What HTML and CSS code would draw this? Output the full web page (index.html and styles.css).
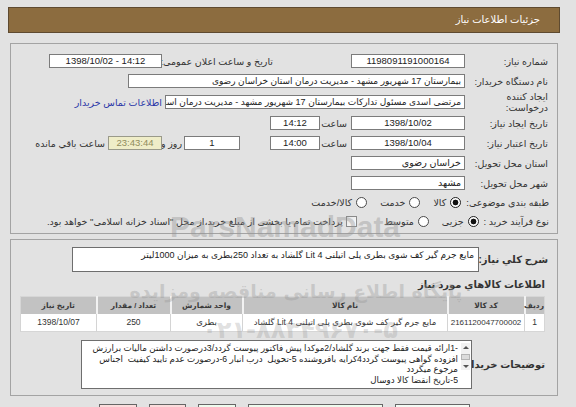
FILE: index.html
```html
<!DOCTYPE html>
<html lang="fa" dir="rtl">
<head>
<meta charset="utf-8">
<title>جزئیات اطلاعات نیاز</title>
<link rel="stylesheet" href="styles.css">
</head>
<body>
<div class="page">
  <div class="titlebar">جزئیات اطلاعات نیاز</div>

  <div class="panel panel-info">
    <div class="row">
      <div class="lbl">شماره نیاز:</div>
      <div class="box w114 c">1198091191000164</div>
      <div class="lbl2">تاریخ و ساعت اعلان عمومی:</div>
      <div class="box w113 c ltr">1398/10/02 - 14:12</div>
    </div>
    <div class="row">
      <div class="lbl">نام دستگاه خریدار:</div>
      <div class="box w337">بیمارستان 17 شهریور مشهد - مدیریت درمان استان خراسان رضوی</div>
    </div>
    <div class="row row-tall">
      <div class="lbl two">ایجاد کننده<br>درخواست:</div>
      <div class="box w300">مرتضی اسدی مسئول تداركات بیمارستان 17 شهریور مشهد - مدیریت درمان استان خراسان رضوی</div>
      <a class="contact" href="#">اطلاعات تماس خریدار</a>
    </div>
    <div class="row">
      <div class="lbl">تاریخ ایجاد نیاز:</div>
      <div class="box w114 c">1398/10/02</div>
      <div class="unit">ساعت</div>
      <div class="box w50 c">14:12</div>
    </div>
    <div class="row">
      <div class="lbl">تاریخ اعتبار نیاز:</div>
      <div class="box w114 c">1398/10/04</div>
      <div class="unit">ساعت</div>
      <div class="box w50 c">14:00</div>
      <div class="box w56 c days">1</div>
      <div class="unit-day">روز و</div>
      <div class="box w54 c countdown">23:43:44</div>
      <div class="remain">ساعت باقي مانده</div>
    </div>
    <div class="row">
      <div class="lbl">استان محل تحویل:</div>
      <div class="box w114">خراسان رضوی</div>
    </div>
    <div class="row">
      <div class="lbl">شهر محل تحویل:</div>
      <div class="box w114">مشهد</div>
    </div>
    <div class="row row-opt">
      <div class="lbl-auto">طبقه بندی موضوعی:</div>
      <span class="radio on"></span><span class="opt">کالا</span>
      <span class="radio"></span><span class="opt">خدمت</span>
      <span class="radio"></span><span class="opt">کالا/خدمت</span>
    </div>
    <div class="row row-opt row-last">
      <div class="lbl-auto">نوع فرآیند خرید :</div>
      <span class="radio on"></span><span class="opt">جزیی</span>
      <span class="radio"></span><span class="opt">متوسط</span>
      <span class="check"></span><span class="opt">پرداخت تمام یا بخشی از مبلغ خرید،از محل "اسناد خزانه اسلامی" خواهد بود.</span>
    </div>
  </div>

  <div class="panel panel-items">
    <div class="desc-row">
      <div class="blbl desc-lbl">شرح کلي نیاز:</div>
      <div class="descbox">مایع جرم گیر كف شوی بطری پلی اتیلنی 4 Lit گلشاد به تعداد 250بطری به میزان 1000لیتر</div>
    </div>
    <div class="sect-title">اطلاعات کالاهاي مورد نیاز</div>
    <table class="items">
      <colgroup>
        <col class="c-idx"><col class="c-code"><col class="c-name"><col class="c-unit"><col class="c-qty"><col class="c-date">
      </colgroup>
      <thead>
        <tr><th>ردیف</th><th>کد کالا</th><th>نام کالا</th><th>واحد شمارش</th><th>تعداد / مقدار</th><th>تاریخ نیاز</th></tr>
      </thead>
      <tbody>
        <tr><td>1</td><td class="code">2161120047700002</td><td>مایع جرم گیر كف شوی بطری پلی اتیلنی 4 Lit گلشاد</td><td>بطری</td><td>250</td><td>1398/10/07</td></tr>
      </tbody>
    </table>
    <div class="notes-row">
      <div class="blbl notes-lbl">توضیحات خریدار:</div>
      <div class="notes">
        <div class="scrollbar">
          <span class="arrow up"></span>
          <span class="thumb"></span>
          <span class="arrow down"></span>
        </div>
        <div class="notes-text">
          <div class="line">-1ارائه قیمت فقط جهت برند گلشاد/2موكدا پیش فاكتور پیوست گردد/3درصورت داشتن مالیات برارزش</div>
          <div class="line">افزوده گواهی پیوست گردد4كرایه بافروشنده 5-تحویل&nbsp; درب انبار 6-درصورت عدم تایید کیفیت&nbsp; اجناس</div>
          <div class="line">مرجوع میگردد</div>
          <div class="line">5-تاریخ انقضا كالا دوسال</div>
        </div>
      </div>
    </div>
  </div>

  <div class="buttons">
    <button class="btn btn-a" type="button"></button>
    <button class="btn btn-b" type="button"></button>
    <button class="btn btn-c" type="button"></button>
    <button class="btn btn-d" type="button"></button>
    <button class="btn btn-e" type="button"></button>
  </div>
</div>

<div class="watermark" aria-hidden="true">
  <svg class="wm-svg" width="576" height="407" viewBox="0 0 576 407">
    <text class="wm-latin" x="285" y="237" text-anchor="middle">ParsNamadData</text>
    <text class="wm-fa" x="296" y="298" text-anchor="middle">پایگاه اطلاع رسانی مناقصه ومزایده</text>
    <text class="wm-phone" x="300" y="338" text-anchor="middle" direction="ltr">۰۲۱-۸۸۳۴۹۶۷۰-۵</text>
  </svg>
</div>
</body>
</html>
```

FILE: styles.css
```css
* { box-sizing: border-box; }

html { background: #e2e2e2; }

body {
  margin: 7px 16px 8px 8px;
  background: #e2e2e2;
  color: #333;
  direction: rtl;
  font-family: "Liberation Sans", "DejaVu Sans", sans-serif;
  font-size: 9.5px;
}

.page {
  width: 552px;
  margin-right: auto;
  margin-left: 0;
}

.titlebar {
  height: 26px;
  line-height: 24px;
  background: #8c6c3f;
  border: 1px solid #5e4a30;
  color: #fff;
  padding-right: 19px;
  font-size: 10px;
}

.panel {
  border: 1px solid #a3a3a3;
  margin: 0 2px;
}

.panel-info {
  margin-top: 10px;
  padding: 7px 8px 3px 8px;
}

.row {
  display: flex;
  align-items: center;
  height: 20px;
}
.row-tall { height: 22px; }
.row-opt { height: 19px; }
.row-last { height: 18px; }

.lbl {
  flex: none;
  width: 84px;
  padding-right: 1px;
  white-space: nowrap;
}
.lbl.two { line-height: 11px; }

.lbl2 {
  flex: none;
  width: 111px;
  margin-right: 78px;
  white-space: nowrap;
}

.box {
  flex: none;
  height: 14px;
  line-height: 12px;
  border: 1px solid #7b7b7b;
  background: #fff;
  color: #222;
  padding: 0 3px;
  white-space: nowrap;
  overflow: hidden;
}
.box.c { text-align: center; }
.box.ltr { direction: ltr; }

.w114 { width: 114px; }
.w113 { width: 113px; }
.w337 { width: 337px; font-size: 9px; }
.w300 { width: 300px; font-size: 9px; }
.w50 { width: 50px; }
.w56 { width: 56px; }
.w54 { width: 54px; }

.contact {
  margin-right: 3px;
  color: #2b38a8;
  text-decoration: none;
  white-space: nowrap;
}

.unit {
  flex: none;
  width: 31px;
  padding-right: 4px;
  white-space: nowrap;
}

.days { margin-right: 30px; }

.unit-day {
  flex: none;
  width: 22px;
  padding-right: 2px;
  white-space: nowrap;
}

.countdown {
  background: #efedc8;
  color: #8f8c5c;
  border-color: #9a9a8a;
}

.remain {
  margin-right: 3px;
  white-space: nowrap;
}

.lbl-auto {
  flex: none;
  white-space: nowrap;
  margin-left: 5px;
}

.radio {
  flex: none;
  width: 11px;
  height: 11px;
  border: 1px solid #4a4a4a;
  border-radius: 50%;
  background: #fff;
  margin-left: 4px;
}
.radio.on {
  background: radial-gradient(circle, #111 0 2.6px, #fff 3.2px);
  border-color: #222;
}

.opt {
  white-space: nowrap;
  margin-left: 13px;
}

.check {
  flex: none;
  width: 11px;
  height: 11px;
  border: 1px solid #8a8a8a;
  background: linear-gradient(135deg, #e4e4e4, #fff);
  margin-right: 14px;
  margin-left: 3px;
}

/* panel 2 */
.panel-items {
  margin-top: 5px;
  padding: 7px 8px 6px 8px;
}

.blbl {
  font-weight: bold;
  font-size: 10px;
  color: #333;
  white-space: nowrap;
  flex: none;
}

.desc-row {
  display: flex;
  align-items: center;
}
.desc-lbl { width: 70px; padding-right: 1px; }

.descbox {
  width: 407px;
  height: 25px;
  background: #fff;
  border: 1px solid #6e6e6e;
  color: #222;
  padding: 1px 4px;
  line-height: 12px;
  font-size: 9px;
  white-space: nowrap;
  overflow: hidden;
}

.sect-title {
  margin: 6px 4px 0 0;
  height: 14px;
  line-height: 14px;
  font-weight: bold;
  font-size: 10px;
}

.items {
  margin: 4px 4px 0 0;
  width: 524px;
  border-collapse: collapse;
  table-layout: fixed;
  border: 1px solid #d6d6d6;
  font-size: 8.5px;
}
.c-idx { width: 20px; }
.c-code { width: 77px; }
.c-name { width: 205px; }
.c-unit { width: 72px; }
.c-qty { width: 74px; }
.c-date { width: 76px; }

.items th {
  height: 17px;
  background: #c2c2c2;
  border-left: 2px solid #f2f2f2;
  color: #3a3a3a;
  font-weight: bold;
  font-size: 7.5px;
  text-align: center;
  padding: 0;
  white-space: nowrap;
}
.items th:last-child { border-left: none; }

.items td {
  height: 18px;
  background: #fff;
  border-left: 1px solid #d4d4d4;
  color: #333;
  text-align: center;
  padding: 0 1px;
  white-space: nowrap;
  overflow: hidden;
}
.items td.code {
  font-size: 8px;
  padding: 0;
}

.notes-row {
  display: flex;
  align-items: center;
  margin: 8px 4px 0 0;
}
.notes-lbl { width: 73px; }

.notes {
  width: 391px;
  height: 49px;
  background: #fff;
  border: 1px solid #6e6e6e;
  display: flex;
  padding: 2px 1px 0 2px;
  overflow: hidden;
}

.scrollbar {
  flex: none;
  width: 9px;
  height: 27px;
  background: #f1f1f1;
  display: flex;
  flex-direction: column;
  align-items: center;
  justify-content: space-between;
  padding: 3px 0 2px;
  margin-left: 3px;
}
.arrow {
  width: 0;
  height: 0;
  border-left: 3px solid transparent;
  border-right: 3px solid transparent;
}
.arrow.up { border-bottom: 3px solid #555; }
.arrow.down { border-top: 3px solid #555; }
.thumb {
  width: 9px;
  height: 6px;
  background: #dcdcdc;
  border: 1px solid #b5b5b5;
}

.notes-text {
  flex: 1;
  min-width: 0;
  line-height: 10.6px;
  font-size: 8.7px;
  color: #222;
}
.line {
  white-space: nowrap;
  overflow: hidden;
}

.buttons {
  display: flex;
  justify-content: center;
  gap: 12px;
  margin-top: 8px;
}
.btn {
  height: 24px;
  border: 1px solid #666;
  padding: 0;
  font: inherit;
}
.btn-a { width: 75px; background: #f4faf4; }
.btn-b { width: 135px; background: #eefbee; }
.btn-c { width: 38px; background: #eefbee; }
.btn-d { width: 37px; background: #fbdcdc; }
.btn-e { width: 38px; background: #fbdcdc; }

/* watermark overlay */
.watermark {
  position: absolute;
  top: 0;
  left: 0;
  width: 576px;
  height: 407px;
  overflow: hidden;
  pointer-events: none;
}
.wm-latin {
  font-family: "Liberation Sans", sans-serif;
  font-weight: bold;
  font-size: 30px;
  fill: rgba(150, 150, 150, 0.42);
}
.wm-fa {
  font-family: "DejaVu Sans", sans-serif;
  font-weight: bold;
  font-size: 19px;
  fill: rgba(150, 150, 150, 0.36);
}
.wm-phone {
  font-family: "DejaVu Sans", sans-serif;
  font-weight: bold;
  font-size: 24px;
  fill: rgba(150, 150, 150, 0.3);
}
```
